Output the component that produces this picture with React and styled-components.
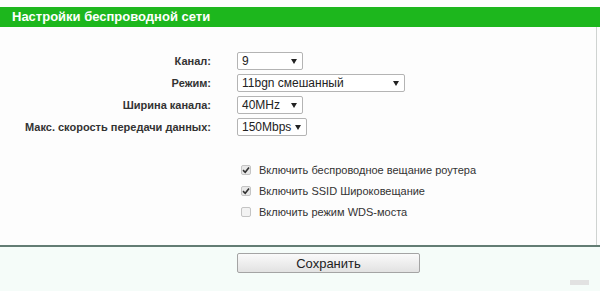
import React from "react";
import styled, { createGlobalStyle } from "styled-components";

const GlobalStyle = createGlobalStyle`
  body {
    margin: 0;
    background: #fdfdfd;
    font-family: "Liberation Sans", Arial, sans-serif;
  }
`;

const Page = styled.div`
  width: 600px;
  height: 291px;
  display: flex;
  flex-direction: column;
  position: relative;
  overflow: hidden;
  padding-top: 7px;
  box-sizing: border-box;
`;

const Header = styled.div`
  height: 20px;
  background: #1db71d;
  color: #fff;
  font-weight: bold;
  font-size: 13px;
  line-height: 20px;
  padding-left: 12px;
`;

const Panel = styled.div`
  width: 597px;
  border-right: 1px solid #cfd3d1;
  box-sizing: border-box;
  height: 218px;
  padding-top: 25px;
  display: flex;
  flex-direction: column;
`;

const Form = styled.div`
  display: grid;
  grid-template-columns: 211px auto;
  column-gap: 26px;
  row-gap: 4px;
  align-items: center;
`;

const Label = styled.div`
  text-align: right;
  font-size: 11px;
  font-weight: bold;
  color: #333;
`;

const SelectBox = styled.div`
  width: ${(p) => p.$w}px;
  height: 18px;
  box-sizing: border-box;
  border: 1px solid #b4b4b4;
  border-radius: 2px;
  background: #fff;
  display: flex;
  align-items: center;
  justify-content: space-between;
  padding: 0 5px 0 4px;
  font-size: 12px;
  color: #222;
`;

const Arrow = styled.span`
  width: 0;
  height: 0;
  border-left: 3px solid transparent;
  border-right: 3px solid transparent;
  border-top: 5px solid #222;
`;

const Checks = styled.div`
  margin-top: 28px;
  padding-left: 241px;
  display: flex;
  flex-direction: column;
  gap: 9px;
`;

const CheckRow = styled.div`
  display: flex;
  align-items: center;
  gap: 8px;
  height: 12px;
  font-size: 11px;
  color: #333;
`;

const Box = styled.span`
  width: 10px;
  height: 10px;
  box-sizing: border-box;
  border: 1px solid #c4c4c4;
  border-radius: 2px;
  background: ${(p) => (p.$on ? "#e8e8e8" : "#f3f3f3")};
  display: flex;
  align-items: center;
  justify-content: center;
`;

const Divider = styled.div`
  height: 2px;
  background: #637d74;
`;

const Footer = styled.div`
  flex: 1;
  background: #f5fcf9;
  padding-top: 6px;
  padding-left: 237px;
`;

const SaveButton = styled.div`
  width: 183px;
  height: 20px;
  box-sizing: border-box;
  border: 1px solid #a4a4a4;
  border-radius: 2px;
  background: linear-gradient(#fafafa, #e2e2e2);
  font-size: 13px;
  color: #222;
  display: flex;
  align-items: center;
  justify-content: center;
`;

const Mark = styled.div`
  position: absolute;
  right: 11px;
  bottom: 6px;
  width: 19px;
  height: 5px;
  background: #e2e2e2;
`;

const fields = [
  { label: "Канал:", value: "9", w: 66 },
  { label: "Режим:", value: "11bgn смешанный", w: 168 },
  { label: "Ширина канала:", value: "40MHz", w: 66 },
  { label: "Макс. скорость передачи данных:", value: "150Mbps", w: 70 },
];

const checks = [
  { text: "Включить беспроводное вещание роутера", on: true },
  { text: "Включить SSID Широковещание", on: true },
  { text: "Включить режим WDS-моста", on: false },
];

function Tick() {
  return (
    <svg width="8" height="8" viewBox="0 0 8 8">
      <path d="M1 4.2 L3.2 6.3 L7 1.5" stroke="#333" strokeWidth="1.6" fill="none" />
    </svg>
  );
}

export default function App() {
  return (
    <>
      <GlobalStyle />
      <Page>
        <Header>Настройки беспроводной сети</Header>
        <Panel>
          <Form>
            {fields.map((f) => (
              <React.Fragment key={f.label}>
                <Label>{f.label}</Label>
                <SelectBox $w={f.w}>
                  <span>{f.value}</span>
                  <Arrow />
                </SelectBox>
              </React.Fragment>
            ))}
          </Form>
          <Checks>
            {checks.map((c) => (
              <CheckRow key={c.text}>
                <Box $on={c.on}>{c.on && <Tick />}</Box>
                {c.text}
              </CheckRow>
            ))}
          </Checks>
        </Panel>
        <Divider />
        <Footer>
          <SaveButton>Сохранить</SaveButton>
        </Footer>
        <Mark />
      </Page>
    </>
  );
}
